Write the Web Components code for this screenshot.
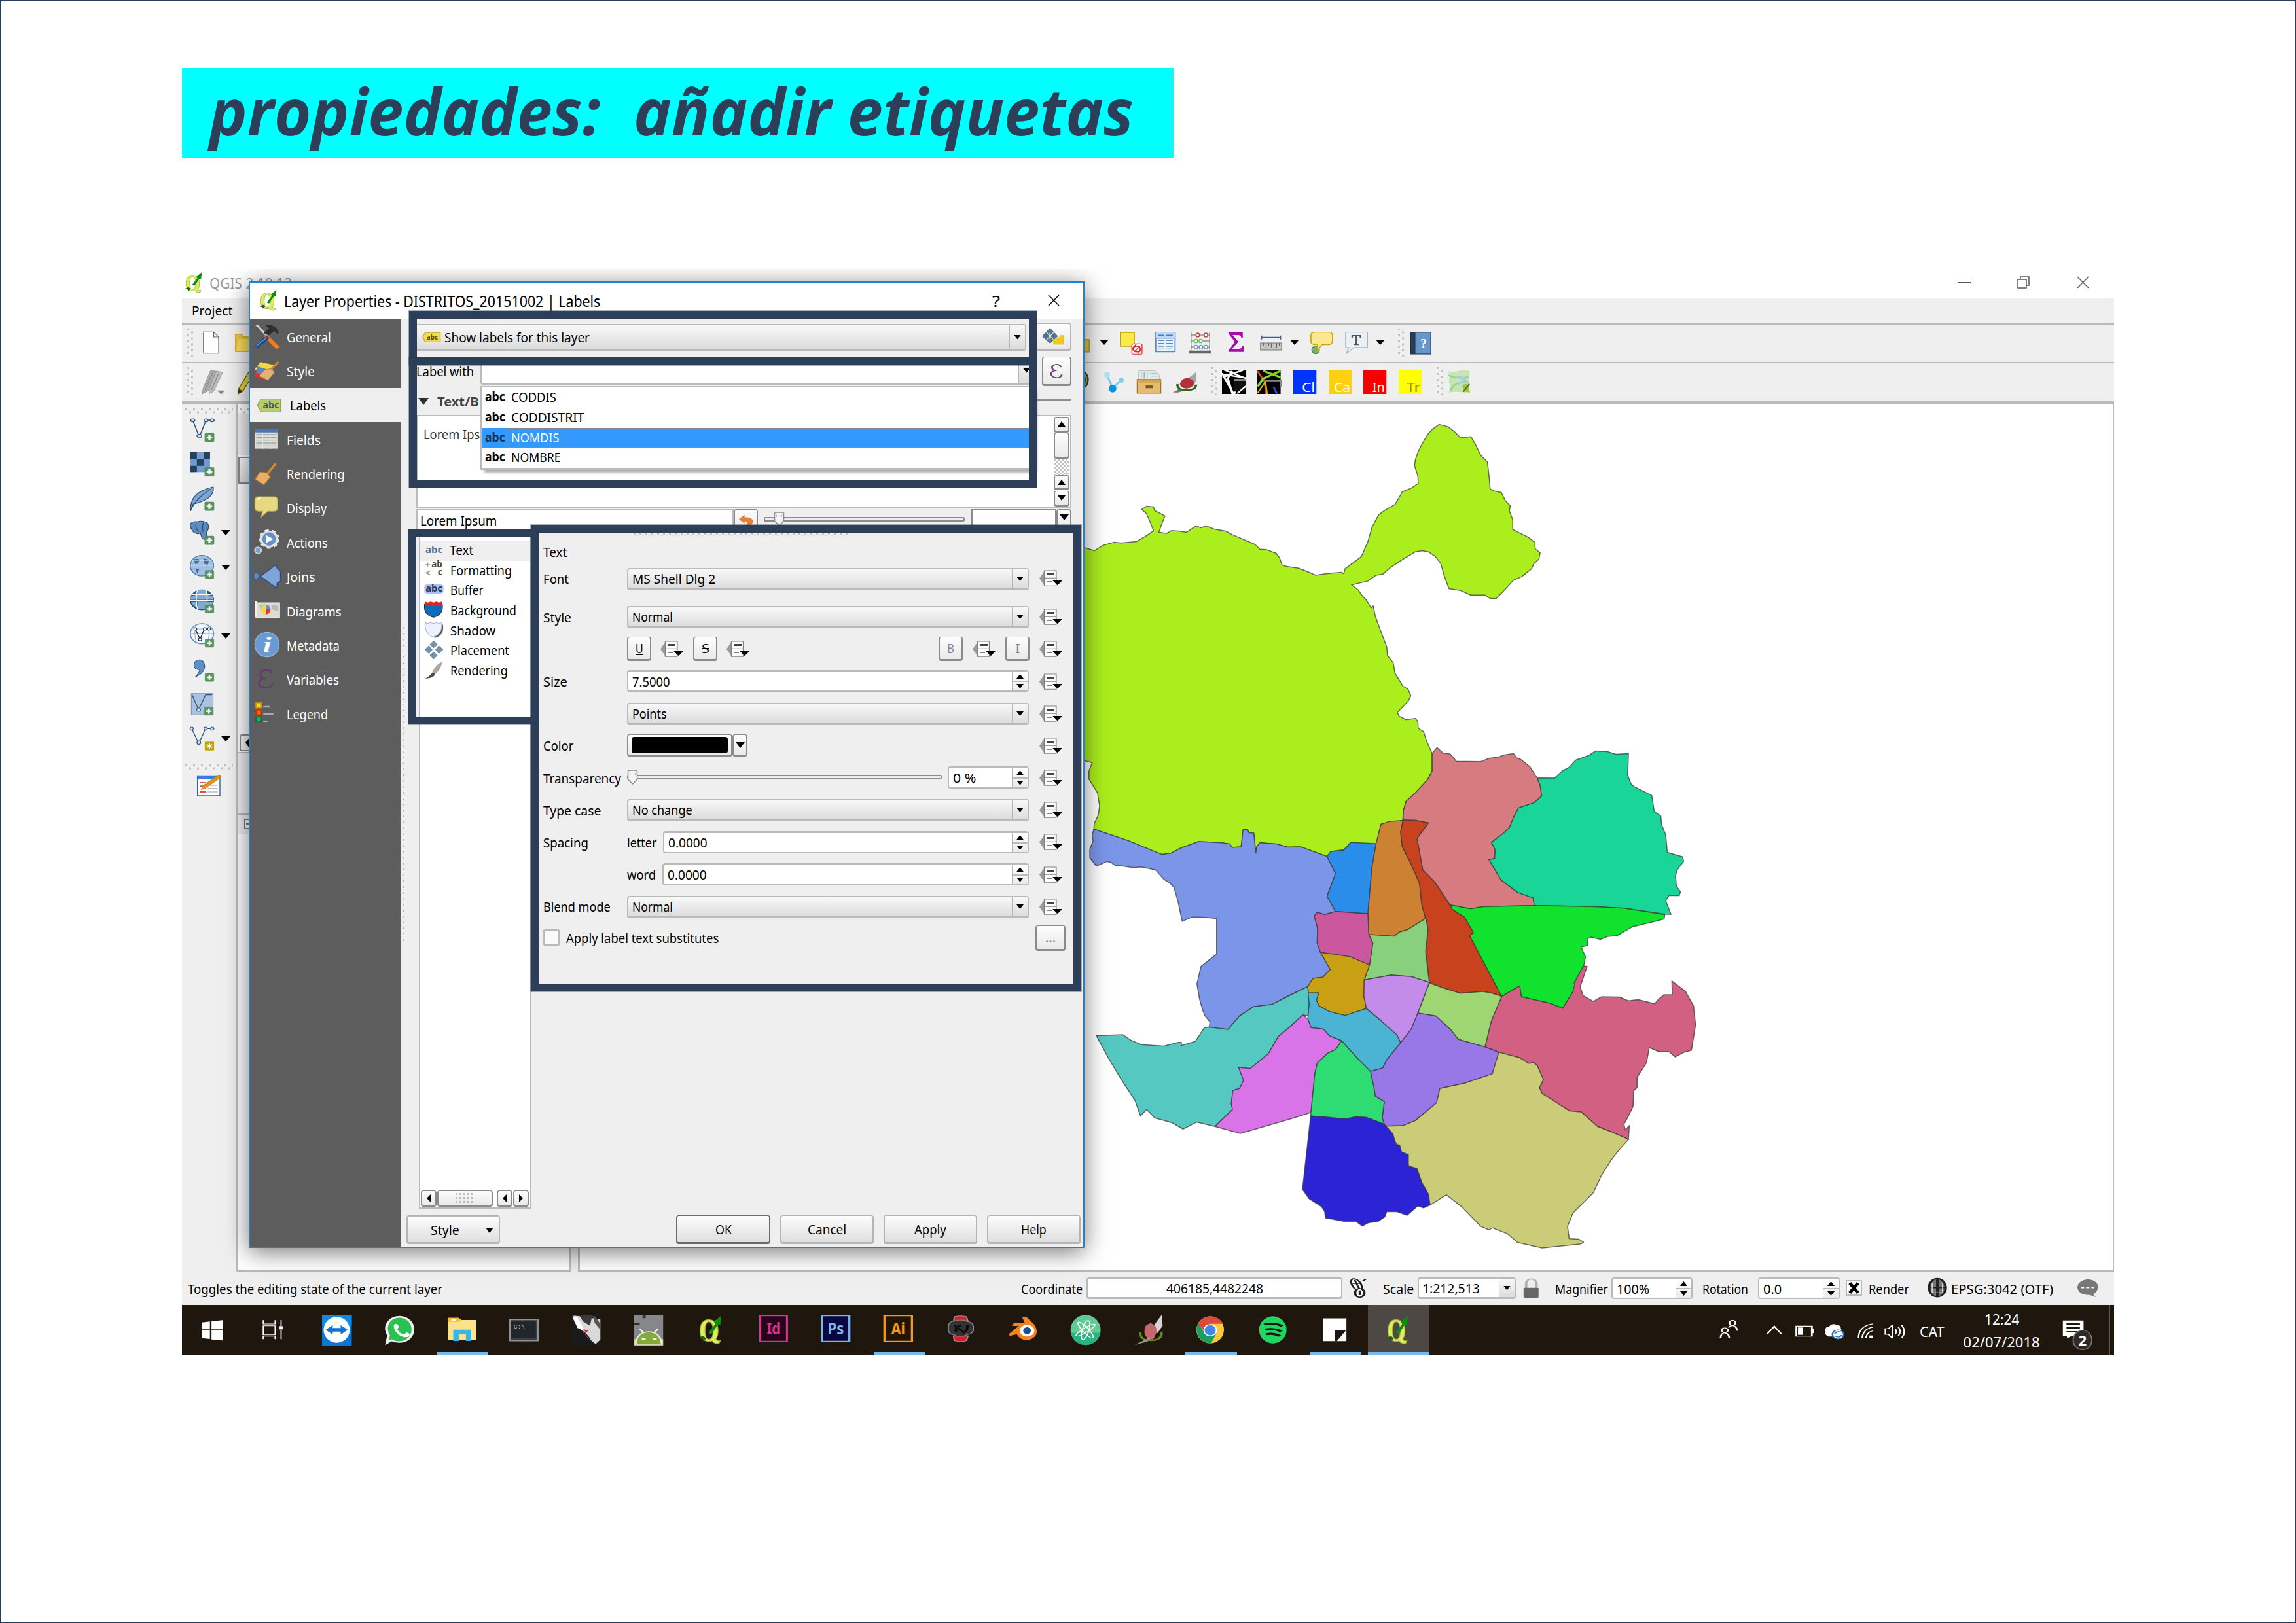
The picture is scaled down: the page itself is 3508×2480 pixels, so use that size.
<!DOCTYPE html>
<html lang="es">
<head>
<meta charset="utf-8">
<title>propiedades: añadir etiquetas</title>
<style>
html,body{margin:0;background:#fff}
body{font-family:"Noto Sans","Open Sans",sans-serif;font-size:20px;color:#000}
</style>
</head>
<body>
<slide-page>
  <page-title slot="title">propiedades:&nbsp; añadir etiquetas</page-title>
  <app-window></app-window>
</slide-page>
<script>
const INK='#2d3f58';
/* Each glyph is drawn on a grid: [origin x, origin y, units per px across, units per px down] */
const GRID={a:[270,400,2.24,3],b:[270,840,2.8,3],c:[600,400,1.4519,3],d:[1600,400,2.24,3],e:[800,790,1.8233,3],
  f:[800,1150,1.8233,3],g:[270,1770,1.12,3],h:[270,1980,1.6505,3],i:[1200,1980,1.5223,3],j:[2000,1930,1.2645,3]};
const box=(x,y,w,h,html,css='')=>({x,y,w,h,html,css});
const svg=(vb,body,extra='')=>`<svg viewBox="${vb}" preserveAspectRatio="none" style="display:block;width:100%;height:100%;overflow:visible" ${extra}>${body}</svg>`;
const G=(k,x,y,w,h,body)=>{const g=GRID[k];return box(g[0]+x/g[2],g[1]+y/g[3],w/g[2],h/g[3],svg(`${x} ${y} ${w} ${h}`,body))};
const T=(x1,x2,yc,text,css='',size=20)=>box(x1,yc-size*.7,x2-x1,size*1.4,`<fit-text style="line-height:${size*1.4}px;font-size:${size}px;${css}">${text}</fit-text>`);
const r=n=>Math.round(n*100)/100;
const row=(x0,y0,items,css='')=>{let p=x0;return `<div style="display:flex;align-items:flex-start;${css}">`+items.map(i=>{const m=i.x-p;p=i.x+i.w;
  return `<div style="flex:none;width:${r(i.w)}px;height:${r(i.h)}px;margin:${r(i.y-y0)}px 0 0 ${r(m)}px;${i.css}">${i.html}</div>`}).join('')+'</div>'};
const col=(x0,y0,items,css='')=>{let p=y0;return `<div style="display:flex;flex-direction:column;align-items:flex-start;${css}">`+items.map(i=>{const m=i.y-p;p=i.y+i.h;
  return `<div style="flex:none;width:${r(i.w)}px;height:${r(i.h)}px;margin:${r(m)}px 0 0 ${r(i.x-x0)}px;${i.css}">${i.html}</div>`}).join('')+'</div>'};
const line=(x,y,w,h,c)=>box(x,y,w,h,'','background:'+c);
const dots=(x,y,w,h,tw=12,th=9)=>box(x,y,w,h,'',`background:conic-gradient(at 3px 3px,#0000 75%,#c2c2c2 0) 0 0/${tw}px ${th}px,conic-gradient(at 3px 3px,#0000 75%,#c2c2c2 0) ${tw/2}px ${th/2}px/${tw}px ${th}px`);
const tri=(x,y,w=14,h=8,c='#000')=>box(x,y,w,h,'',`background:${c};clip-path:polygon(0 0,100% 0,50% 100%)`);

class Base extends HTMLElement{
  constructor(){super();this.attachShadow({mode:'open'})}
  connectedCallback(){this.shadowRoot.innerHTML=`<style>:host{display:block;box-sizing:border-box}*{box-sizing:border-box}${this.css?this.css():''}</style>${this.html()}`;this.ready&&this.ready()}
  a(n,d=''){return this.hasAttribute(n)?this.getAttribute(n):d}
}
const def=(n,c)=>customElements.define(n,c);

/* Text squeezed or stretched to the width of its box */
def('fit-text',class extends Base{
  css(){return ':host{width:100%;white-space:pre}span{display:inline-block;transform-origin:0 50%}'}
  html(){return '<span><slot></slot></span>'}
  ready(){const s=this.shadowRoot.querySelector('span'),w=s.offsetWidth,t=this.offsetWidth;if(w&&t)s.style.transform=`scaleX(${t/w})`}
});
def('page-title',class extends Base{
  css(){return `:host{width:1515px;height:137px;margin:102px 0 0 276px;background:#0ff;color:${INK};padding:0 0 0 42px}
    fit-text{width:1412px;font:italic 700 98px/131px "Open Sans","Noto Sans",sans-serif}`}
  html(){return '<fit-text><slot></slot></fit-text>'}
});
def('mark-frame',class extends Base{
  css(){return `:host{position:absolute;border:solid ${INK};border-width:12.5px 12px;outline:1px solid #2d3f5866}`}
  html(){return ''}
});

/* ---- form controls ---- */
def('q-combo',class extends Base{
  css(){return `:host{height:100%;display:flex;align-items:center;border:2px solid #bababa;border-bottom-width:3px;border-radius:4px;background:${this.hasAttribute('edit')?'#fff':'linear-gradient(#f8f8f8,#dcdcdc)'};padding-left:${this.a('pad','6')}px}
    .t{width:${this.a('tw')}px}.a{align-self:stretch;margin-left:auto;width:24px;border-left:1.5px solid #b5b5b5;display:flex;align-items:center;justify-content:center;background:linear-gradient(#f8f8f8,#dcdcdc)}
    .a i{width:11px;height:7px;background:#000;clip-path:polygon(0 0,100% 0,50% 100%)}`}
  html(){return `<slot name="icon"></slot><fit-text class="t"><slot></slot></fit-text><div class="a"><i></i></div>`}
});
def('q-spin',class extends Base{
  css(){return `:host{height:100%;display:flex;align-items:center;border:2px solid #bababa;border-top-width:3px;border-radius:4px;background:#fff;padding-left:6px}
    .t{width:${this.a('tw')}px}.a{align-self:stretch;margin-left:auto;width:24px;border-left:1.5px solid #b5b5b5;display:flex;flex-direction:column;background:linear-gradient(#fff,#ebebeb)}
    .a div{flex:1;display:flex;align-items:center;justify-content:center}.a div+div{border-top:2px solid #bababa}
    i{width:11px;height:7px;background:#000;clip-path:polygon(0 0,100% 0,50% 100%)}.u{clip-path:polygon(0 100%,100% 100%,50% 0)}`}
  html(){return `<fit-text class="t"><slot></slot></fit-text><div class="a"><div><i class="u"></i></div><div><i></i></div></div>`}
});
def('q-button',class extends Base{
  css(){return `:host{height:100%;display:flex;align-items:center;justify-content:center;border:2px solid ${this.a('edge','#8a8a8a')};border-top-width:1.5px;border-bottom-width:3px;border-radius:4px;background:linear-gradient(#fdfdfd,${this.a('to','#e9e9e9')})}
    .t{width:${this.a('tw','12')}px}`}
  html(){return this.hasAttribute('tw')?`<fit-text class="t"><slot></slot></fit-text>`:'<slot></slot>'}
});
def('q-slider',class extends Base{
  css(){return `:host{height:100%;position:relative;display:flex;align-items:center}.g{flex:1;height:7px;border:2px solid #8c8c8c;background:#eee;border-radius:2px}
    svg{position:absolute;left:${this.a('at','0')}px;top:0;width:17px;height:100%}`}
  html(){return `<div class="g"></div><svg viewBox="0 0 17 23" preserveAspectRatio="none"><path d="M1.5 3Q1.5 1 4 1H13Q15.500 1 15.500 3V15L8.500 22L1.500 15Z" fill="#f4f4f4" stroke="#8c8c8c" stroke-width="1.5"/><path d="M4.500 5v3M12.500 5v3" stroke="#bbb" stroke-width="1.500"/></svg>`}
});
const combo=(x,y,w,h,t,tw)=>box(x,y,w,h,`<q-combo tw="${tw}">${t}</q-combo>`);
const spin=(x,y,w,h,t,tw)=>box(x,y,w,h,`<q-spin tw="${tw}">${t}</q-spin>`);
const btn=(x,y,w,h,t,tw,at='')=>box(x,y,w,h,`<q-button ${tw?`tw="${tw}"`:''} ${at}>${t}</q-button>`);
const over=(x,y)=>box(x,y,35,26,svg('1436 243 64 78','<path d="M1450 248 L1436 281 L1450 314Z" fill="#9a9a9a"/><path d="M1450 246h33v70h-33zM1450 280h33" fill="#fff" stroke="#808080" stroke-width="3"/><path d="M1456 258h22v9h-22z" fill="#444"/><path d="M1457 297h14" stroke="#444" stroke-width="4"/><path d="M1473 291h27l-13 22z"/>'));

/* ---- shared drawings ---- */
const plus=(x,y,w,h,c='#5a9460')=>`<rect x="${x}" y="${y}" width="${w}" height="${h}" rx="4" fill="${c}" stroke="#3f7a48" stroke-width="1"/><path d="M${x+w/2} ${y+h*.2}v${h*.6}M${x+w*.2} ${y+h/2}h${w*.6}" stroke="#fff" stroke-width="7"/>`;
const qlogo='<path fill-rule="evenodd" d="M13 4C2 4-2 17-2 30C-2 45 3 54 13 55L20 54Q24 62 33 59L35 53Q29 55 27 49C31 43 31 36 31 29C31 14 25 4 13 4ZM14 9C20 9 22 20 22 30C22 40 20 50 14 50C9 50 7 40 7 29C7 19 9 9 14 9Z" fill="#dced5c" stroke="#9fae36" stroke-width="1.5"/><path d="M13 35L26 13L23 9L37-6L35 16L31 15L19 38Z" fill="#0f8a12"/><path d="M-4 47L4 42L9 48L4 55L2 50Z" fill="#215a22"/>';
const logo=(x,y,w,h)=>box(x,y,w,h,svg('-4 -6 42 66',qlogo));

/* ---- districts map ---- */
const LIME='M0 480L12 486 36 496 56 478 84 467 100 470 138 465 150 455 160 447 180 428 172 400 163 370 151 355 163 344 180 346 182 358 208 377 200 405 193 433 212 437 224 427 240 429 260 433 270 424 284 411 296 418 308 411 330 423 356 429 372 441 404 460 428 475 440 491 455 492 480 505 488 520 494 545 505 550 535 556 560 570 576 580 600 575 640 570 645 575 648 558 670 535 688 516 704 465 714 415 730 374 745 358 770 338 780 315 788 294 810 282 827 266 826 240 818 205 820 185 826 160 836 132 850 98 862 80 878 64 900 72 915 88 930 109 956 106 968 135 980 170 996 192 998 215 1000 240 1003 285 1012 291 1030 297 1040 325 1052 342 1050 360 1058 390 1058 423 1075 436 1096 450 1112 468 1113 490 1125 503 1122 525 1110 540 1104 558 1080 585 1060 597 1045 620 1030 642 1017 660 1002 659 990 648 955 648 930 632 902 626 890 580 882 540 868 515 852 500 836 496 820 500 790 525 760 553 740 577 724 580 704 600 664 613 680 630 690 650 700 665 712 692 717 685 722 720 735 770 750 825 752 855 766 880 770 915 790 960 802 970 809 992 803 1010 776 1050 780 1062 797 1074 820 1070 826 1080 827 1104 840 1115 848 1150 861 1190 861 1250 850 1280 820 1325 797 1355 791 1385 789 1420 736 1432 724 1502 662 1495 645 1520 613 1526 604 1543 540 1510 508 1511 480 1500 440 1496 432 1510 430 1532 425 1463 413 1462 410 1451 399 1451 394 1510 372 1512 366 1500 346 1496 290 1492 245 1515 222 1532 200 1536 120 1490 34 1449 35 1430 45 1400 48 1370 43 1325 22 1278 22 1250 30 1222 12 1215 0 1215Z';
const DIST=[
['#7b96e8','34 60 120 101 200 147 222 143 245 126 290 103 346 107 366 111 372 123 394 121 399 62 410 62 413 73 425 74 430 143 432 121 440 107 480 111 508 122 540 121 604 154 625 212 604 290 625 342 598 353 580 345 573 358 581 400 580 450 588 482 612 541 594 567 570 571 557 599 510 630 470 660 425 668 390 700 362 746 340 743 316 738 318 720 306 700 300 680 292 640 286 590 296 530 334 488 334 366 300 362 275 361 250 376 246 350 240 310 230 260 220 245 205 232 185 200 150 190 130 192 100 186 85 184 76 174 66 171 40 187 24 158 24 130 32 100 30 80'],
['#2a8dea','604 154 613 137 645 132 662 106 724 110 714 190 704 350 625 342 604 290 625 212'],
['#d67c80','861 -199 873 -219 888 -200 905 -197 920 -172 980 -171 1000 -182 1025 -187 1035 -193 1060 -198 1068 -183 1078 -178 1100 -153 1118 -115 1125 -90 1129 -53 1110 -30 1072 -12 1060 20 1050 55 1035 75 1006 106 1015 130 1014 160 1000 165 1030 235 1070 277 1108 296 1111 322 985 326 955 333 905 320 868 243 838 200 824 92 852 39 820 30 790 29 791 -4 797 -34 820 -64 850 -109 861 -139'],
['#1ad598','1118 -115 1160 -114 1180 -140 1195 -150 1212 -176 1245 -193 1260 -207 1290 -205 1310 -196 1341 -198 1339 -125 1347 -95 1355 -85 1398 -55 1404 0 1420 15 1422 45 1432 80 1436 140 1473 155 1476 170 1460 200 1456 220 1458 255 1468 275 1465 288 1440 288 1432 305 1445 352 1430 351 1330 331 1260 326 1111 322 1108 296 1070 277 1030 235 1000 165 1014 160 1015 130 1006 106 1035 75 1050 55 1060 20 1072 -12 1110 -30 1129 -53 1125 -90'],
['#11e22d','905 320 955 333 985 326 1111 322 1260 326 1330 331 1430 353 1428 368 1400 378 1350 395 1313 425 1290 428 1272 438 1250 430 1240 436 1242 458 1225 464 1236 497 1230 540 1206 590 1206 615 1180 674 1150 657 1079 634 1075 597 1031 633 952 424 962 415 940 362 910 335'],
['#cd8132','736 44 755 34 790 30 784 70 788 120 808 175 830 245 836 320 845 366 800 405 782 412 768 427 706 421 704 350 714 190 724 110'],
['#c9421e','790 29 820 30 852 39 824 92 838 200 868 243 905 322 910 335 940 362 962 415 952 424 1031 633 1008 622 985 616 930 622 890 605 854 585 845 480 851 400 845 366 836 320 830 245 808 175 788 120 784 70'],
['#d26083','1031 633 1075 597 1079 634 1150 657 1180 674 1206 615 1210 582 1230 530 1240 530 1223 600 1230 630 1255 650 1275 634 1320 635 1340 648 1365 644 1405 658 1415 642 1428 627 1448 627 1447 580 1480 615 1500 665 1505 730 1495 817 1475 825 1455 840 1440 822 1415 822 1392 808 1385 860 1362 910 1362 945 1354 955 1352 1010 1340 1045 1330 1070 1333 1090 1343 1075 1341 1122 1300 1097 1265 1078 1225 1028 1197 1025 1130 965 1123 945 1133 918 1118 870 1110 860 1097 862 1075 843 1024 824 990 806 1006 715'],
['#9dd672','854 587 890 605 930 622 985 616 1008 622 1031 633 1006 715 990 806 925 780 905 745 870 700 826 690'],
['#88d07c','706 421 768 427 782 412 800 405 845 366 851 400 845 480 854 585 810 565 760 560 695 577 708 525 716 450'],
['#cb589e','573 358 580 345 598 353 625 342 704 350 706 421 716 450 708 525 660 497 588 482 580 450 581 400'],
['#c9a014','588 482 660 497 708 525 695 577 694 630 700 675 648 698 610 685 584 665 578 645 584 621 556 621 557 599 570 571 594 567 612 541'],
['#c38cea','695 577 760 560 810 565 854 585 826 690 810 745 784 792 775 765 735 715 700 673 694 630'],
['#4bb4d4','556 621 584 621 578 645 584 665 610 685 648 698 700 675 735 715 775 765 784 792 750 850 740 878 710 890 675 840 640 785 610 768 595 745 565 740 557 710 560 660'],
['#9877e6','826 690 870 700 905 745 925 780 990 806 1024 824 1008 898 940 930 880 948 872 997 820 1058 790 1075 746 1077 739 1050 744 993 722 975 718 940 710 890 740 878 750 850 784 792 810 745'],
['#55c8c1','557 599 560 660 557 700 545 696 515 735 485 770 460 830 416 880 388 876 400 920 390 948 374 955 370 1000 373 1020 330 1078 285 1063 252 1087 225 1065 183 1049 163 1020 148 1042 135 990 100 915 70 845 40 767 105 764 125 783 150 798 205 803 240 790 248 790 248 801 282 787 304 740 316 738 362 746 390 700 425 668 470 660'],
['#d873e8','545 696 557 710 565 740 595 745 610 768 640 785 625 815 605 828 580 862 574 900 565 1030 520 1050 392 1102 330 1078 373 1020 370 1000 374 955 390 948 400 920 388 876 416 880 460 830 485 770 515 735'],
['#2fdc74','640 785 675 840 710 890 718 940 722 975 744 993 739 1050 744 1070 700 1047 675 1045 650 1052 564 1042 574 900 580 862 605 828 625 815'],
['#cacc77','1024 824 1075 843 1097 862 1110 860 1118 870 1133 918 1123 945 1130 965 1197 1025 1225 1028 1265 1078 1300 1097 1341 1122 1320 1155 1300 1190 1275 1245 1255 1305 1205 1375 1192 1420 1196 1462 1220 1464 1231 1474 1225 1480 1130 1494 1070 1475 1045 1445 1008 1425 1000 1432 980 1420 935 1355 896 1312 856 1347 780 1150 746 1077 790 1075 820 1058 872 997 880 948 940 930 1008 898'],
['#2c24d4','564 1042 650 1052 675 1045 700 1047 744 1070 765 1103 772 1138 782 1143 786 1165 803 1175 803 1213 824 1222 836 1270 852 1310 856 1347 840 1357 826 1350 800 1382 775 1370 750 1370 745 1388 730 1402 705 1408 690 1419 675 1403 645 1403 600 1391 598 1368 590 1352 560 1325 544 1293']];
def('district-map',class extends Base{
  css(){return ':host{height:100%}svg{display:block}path,polygon{vector-effect:non-scaling-stroke;stroke:#3a3a3a;stroke-opacity:.75;stroke-width:1.5;stroke-linejoin:round}'}
  html(){return `<svg width="2344" height="1322" viewBox="886 618 2344 1322"><g transform="translate(1650 620) scale(.625 .446429)"><path d="${LIME}" fill="#abee1d"/></g><g transform="translate(1650 1240) scale(.625 .446429)">${DIST.map(d=>`<polygon fill="${d[0]}" points="${d[1]}"/>`).join('')}</g></svg>`}
});

/* ---- main window ---- */
def('tool-bar',class extends Base{
  html(){const k=this.a('n');
  if(k==='1')return row(278,496,[dots(286,502,10,43),
    G('a',90,322,56,100,'<path d="M92 323h35l17 23v74h-52z" fill="#fff" stroke="#666" stroke-width="3"/><path d="M127 323v23h17" fill="none" stroke="#666" stroke-width="3"/>'),
    G('a',200,330,60,84,'<path d="M202 332h20l6 12h30v68h-56z" fill="#f0c53a" stroke="#c99a10" stroke-width="3"/><path d="M212 355h50v56h-58z" fill="#fadb62"/>'),
    G('d',110,355,36,62,'<path d="M110 357h34v58h-34z" fill="#dcc63a" stroke="#a8930c" stroke-width="3"/>'),tri(1680,519),
    G('d',248,322,78,105,'<path d="M250 325h47v63h-47z" fill="#fce94a" stroke="#c4a000" stroke-width="4"/><rect x="289" y="377" width="35" height="48" rx="6" fill="#fff" stroke="#e02a2a" stroke-width="3"/><circle cx="306" cy="401" r="13" fill="none" stroke="#d22" stroke-width="5"/><path d="M297 415l20-28M292 395l12-16M310 422l12-18" stroke="#e03a3a" stroke-width="4"/>'),
    G('d',370,322,70,95,'<path d="M372 325h66v89h-66z" fill="#e9f1fa" stroke="#5b8bc6" stroke-width="4"/><path d="M372 325h66v26h-66z" fill="#bfdaf0"/><path d="M380 339h20M408 339h22" stroke="#4a7dbb" stroke-width="7"/><path d="M374 352h62" stroke="#5b8bc6" stroke-width="2"/><path d="M380 362h20M408 362h22M380 375h20M408 375h22M380 388h20M408 388h22M380 401h20M408 401h22" stroke="#5b8bc6" stroke-width="4"/>'),
    G('d',487,322,75,102,'<path d="M493 324v86M557 324v86M493 337h64M493 364h64M493 391h64" stroke="#666" stroke-width="3" fill="none"/><path d="M487 408h75v14h-75z" fill="#666"/><g stroke-width="4" fill="#fff"><g stroke="#d33e3e"><ellipse cx="516" cy="337" rx="6" ry="9"/><ellipse cx="544" cy="337" rx="6" ry="9"/></g><g stroke="#6cba6c"><ellipse cx="510" cy="364" rx="6" ry="8"/><ellipse cx="526" cy="364" rx="6" ry="8"/></g><g stroke="#6a9ac0"><ellipse cx="510" cy="392" rx="6" ry="9"/><ellipse cx="527" cy="392" rx="6" ry="9"/><ellipse cx="544" cy="392" rx="6" ry="9"/></g></g>'),
    G('d',618,322,54,95,'<path d="M620 325h49v24h-5q-2-12-12-12h-18l20 31-22 32h24q10 0 12-14h4v28h-52v-6l22-40-22-38z" fill="#a60bab"/>'),
    G('d',728,337,76,73,'<path d="M733 348h65M733 339v18M798 339v18" stroke="#3c5f8c" stroke-width="5"/><path d="M730 373h72v33h-72z" fill="#c8c8c8" stroke="#777" stroke-width="3"/><path d="M740 374v14M749 374v20M758 374v14M767 374v20M776 374v14M785 374v20M794 374v14" stroke="#666" stroke-width="2.500"/>'),tri(1971,519),
    G('d',900,320,78,104,'<ellipse cx="918" cy="403" rx="13" ry="18" fill="#79b079" stroke="#4c8a50" stroke-width="3"/><path d="M914 322h50q12 0 12 16v24q0 16-14 17h-22l-16 27 1-27h-10q-13-1-13-17v-24q0-16 12-16z" fill="#fbe98f" stroke="#c9a514" stroke-width="4"/>'),
    G('d',1020,320,78,104,'<path d="M1022 322h75v69h-44l-30 30 10-30h-11z" fill="#eaf1f6" stroke="#a7b4bd" stroke-width="3"/><path d="M1042 335h33v12h-4l-2-7h-8v36h6v5h-17v-5h6v-36h-8l-2 7h-4z" fill="#555"/>'),tri(2102,519),
    dots(2136,502,10,43),
    G('d',1244,320,72,104,'<path d="M1245 322h69v100h-69z" fill="#6695c9" stroke="#223" stroke-width="3"/><path d="M1245 322h16v100h-16z" fill="#2a3c52"/><text x="1278" y="395" font-size="66" textLength="22" lengthAdjust="spacingAndGlyphs" fill="#fff" font-family="Liberation Serif" font-weight="700">?</text>')],'height:57px');
  const sq=(x,f,t,tf,tw)=>G('d',x,495,79,111,`<path d="M${x} 495h79v111h-79z" fill="${f}"/><text x="${x+77-tw}" y="597" font-size="58" textLength="${tw-3}" lengthAdjust="spacingAndGlyphs" fill="${tf}">${t}</text>`);
  return row(278,555,[dots(286,561,10,43),
    G('a',84,494,80,114,'<path d="M115 496l22 6-30 88-20 14 2-24z" fill="#a9a9a9" stroke="#8a8a8a" stroke-width="2"/><path d="M134 500l22 6-30 86-16 12 0-22z" fill="#bdbdbd" stroke="#8a8a8a" stroke-width="2"/><path d="M122 508l-26 78M142 512l-24 74" stroke="#888" stroke-width="3"/><path d="M138 589h26l-13 18z" fill="#888"/>'),
    G('a',210,500,40,106,'<path d="M248 500v44l-22 48-16 12 2-24z" fill="#e8cf3a" stroke="#5a4a10" stroke-width="3"/><path d="M210 604l3-22 12 10z" fill="#333"/>'),
    G('d',112,500,31,80,'<ellipse cx="122" cy="540" rx="18" ry="36" fill="#8fb936" stroke="#333" stroke-width="5"/><path d="M122 512q18 28 0 56" fill="#d9d94a" stroke="#445" stroke-width="3"/>'),
    G('d',195,500,68,100,'<path d="M205 518l19 60 30-36" stroke="#7fc8ef" stroke-width="7" fill="none"/><ellipse cx="205" cy="517" rx="10" ry="14" fill="#b5e1f8"/><ellipse cx="253" cy="542" rx="9" ry="12" fill="#86cdf2"/><ellipse cx="224" cy="580" rx="13" ry="18" fill="#0d93dd"/>'),
    G('d',307,495,83,110,'<path d="M313 540v-40h55l16 16v28z" fill="#e4ebeb" stroke="#a9b5b5" stroke-width="2"/><path d="M322 505v30M332 505v30M342 505v30M354 512h20M354 524h26" stroke="#9aa" stroke-width="3"/><path d="M308 539h81v64h-81z" fill="#e6bb72" stroke="#9c7230" stroke-width="3"/><path d="M308 540h81v14h-81z" fill="#d6a453"/><path d="M337 567h24v13h-24z" fill="#7a5a28"/>'),
    G('d',430,505,82,98,'<path d="M480 538l30-32-2 44-10 26z" fill="#a5a5a5"/><path d="M430 600l24-18 14 10-20 8z" fill="#777"/><path d="M446 562q-4 26 32 28 34-2 30-26" fill="none" stroke="#2c6a1a" stroke-width="8"/><path d="M454 562q4-26 24-28 26 4 24 26-4 22-26 22-20-2-22-20z" fill="#b3303a"/>'),
    dots(1850,561,10,43),
    G('d',598,495,83,111,'<path d="M598 495h83v111h-83z"/><path d="M598 515l82 18M605 495l75 40M600 530l70-34M632 500l-14 34 16 72M598 510l40 96M640 542h40M680 575h-30l-10 31" stroke="#fff" stroke-width="7" fill="none"/><path d="M640 545h40v50h-40z" fill="#111"/><path d="M680 570l-30 34" stroke="#fff" stroke-width="6"/>'),
    G('d',718,495,82,111,'<path d="M718 495h82v111h-82z"/><path d="M720 500l26 50 4 56" stroke="#e23a2a" stroke-width="7" fill="none"/><path d="M740 500l60 30M800 500l-60 36-18 36" stroke="#86d420" stroke-width="9" fill="none"/><path d="M750 545h50v30" fill="none" stroke="#888" stroke-width="7"/><path d="M722 600l26-50 6 56" stroke="#d8b020" stroke-width="5" fill="none"/><path d="M776 575l12 31" stroke="#3344dd" stroke-width="7"/>'),
    sq(842,'#0033fb','Cl','#fff',48),sq(963,'#ffd012','Ca','#fff',59),sq(1083,'#f90000','In','#fff',46),sq(1204,'#ffff00','Tr','#9a8a2a',50),
    dots(2195,561,10,43),
    G('d',1368,495,80,111,'<path d="M1372 500q20 12 38-2 20-4 36 4-6 40 0 60-4 30-10 40-30-10-62-2 6-30 0-50 4-30-2-50z" fill="#c5e5b5"/><path d="M1372 520q30 20 70 8M1380 590q10-40 60-40" stroke="#9ed08e" stroke-width="7" fill="none"/><path d="M1400 530q20-8 30 14l-24 16" fill="none" stroke="#a6cbe6" stroke-width="10"/><path d="M1420 566q10-12 22 0l4 34-20-6z" fill="#a8c040"/><path d="M1424 596l20-36" stroke="#3e7a1a" stroke-width="5"/>')],'height:58px')}
});
const V=(x,y,w,h)=>`<path d="M${x+8} ${y+10}L${x+.37*w} ${y+h*.78}L${x+.65*w} ${y+10}H${x+w-8}" fill="none" stroke="#33557d" stroke-width="4"/><g fill="#cfe0f2" stroke="#33557d" stroke-width="3.500"><circle cx="${x+8}" cy="${y+10}" r="7"/><circle cx="${x+.65*w}" cy="${y+10}" r="7"/><circle cx="${x+w-8}" cy="${y+10}" r="7"/><circle cx="${x+.37*w}" cy="${y+h*.74}" r="8"/></g>`;
def('layer-bar',class extends Base{
  html(){const rr=(i,ty)=>box(278,i.y,83,i.h,row(278,i.y,ty?[i,tri(338,ty,14,8)]:[i]));
  return col(278,618,[dots(283,624,73,9),
    rr(G('a',46,718,82,110,V(46,718,82,110)+plus(95,786,32,40))),
    rr(G('a',46,873,82,110,'<path d="M46 873h67v91h-67z" fill="#6f9bce"/><path d="M46 873h22v31h-22zM91 873h22v31h-22zM68 904h23v31h-23zM46 935h22v29h-22z" fill="#24405f"/>'+plus(95,943,32,40))),
    rr(G('a',44,1032,84,110,'<path d="M46 1142q0-50 20-74t58-36q4 30-18 52-26 22-50 26z" fill="#7ba5d3" stroke="#2c4a6e" stroke-width="3"/><path d="M46 1142q20-60 70-100" stroke="#2c4a6e" stroke-width="3" fill="none"/>'+plus(95,1101,32,40))),
    rr(G('a',44,1188,84,110,'<path d="M46 1200q10-12 24-8 14-6 24 0 14 2 14 22 0 14-6 24v26q-6 14-16 4l-6-26q-6 8-12 4-12-2-18-20-6-14-4-26z" fill="#5e8cbd" stroke="#2c4a6e" stroke-width="3"/><path d="M66 1194q-6 30 10 42M92 1194q-8 20-2 44" stroke="#2c4a6e" stroke-width="3" fill="none"/>'+plus(95,1257,32,40)),810),
    rr(G('b',56,24,104,110,'<ellipse cx="108" cy="73" rx="50" ry="47" fill="#9dbfe2" stroke="#4a78ac" stroke-width="4"/><path d="M72 46q14-8 26 0-4 18-18 20zM114 40l26 6-8 24-14-6zM80 84l16 6-8 20z" fill="#41658f"/><path d="M60 73h96M108 26v94M66 50h84M66 98h84" stroke="#d3e3f4" stroke-width="2"/>'+plus(121,95,38,38)),863),
    rr(G('b',56,183,104,107,'<ellipse cx="108" cy="230" rx="50" ry="46" fill="#2d5078" stroke="#24405f" stroke-width="3"/><path d="M60 212q50-14 96 0v16h-98zM90 186h34v20h-34zM88 238h36v34h-34zM62 240h22l4 26q-20-8-26-26zM130 240h26q-4 18-24 26z" fill="#7fa9d6"/><path d="M58 232h100M88 186q-10 46 2 90M126 186q10 46-2 90M66 205h84" stroke="#fff" stroke-width="4" fill="none"/>'+plus(121,252,38,38))),
    rr(G('b',56,340,104,110,'<ellipse cx="108" cy="386" rx="50" ry="46" fill="#f3f8fd" stroke="#5e90c8" stroke-width="5"/><path d="M58 386h100M64 364h88M108 340v92M84 344q-14 42 2 84M132 344q14 42-2 84" stroke="#8fb4de" stroke-width="3" fill="none"/><path d="M80 364l20 48 18-48h20" fill="none" stroke="#222" stroke-width="4"/><g fill="#fff" stroke="#222" stroke-width="3"><circle cx="80" cy="364" r="6"/><circle cx="120" cy="364" r="6"/><circle cx="138" cy="364" r="6"/><circle cx="100" cy="412" r="7"/></g>'+plus(121,410,38,38)),968),
    rr(G('b',70,504,90,102,'<path d="M96 505q22 0 24 28-2 34-40 49 18-18 18-32-24 0-24-22 2-22 22-23z" fill="#5f8fc6" stroke="#33557d" stroke-width="3"/>'+plus(121,566,38,38))),
    rr(G('b',62,657,98,105,'<path d="M63 659h93v98h-93z" fill="#a9c2dd" stroke="#7e93aa" stroke-width="3"/><path d="M66 665l28 68 30-68h28" fill="none" stroke="#33557d" stroke-width="4"/><circle cx="94" cy="733" r="8" fill="#cfe0f2" stroke="#33557d" stroke-width="3"/>'+plus(119,721,38,38))),
    rr(G('b',56,810,104,110,V(56,810,104,100)+'<rect x="120" y="880" width="40" height="40" rx="3" fill="#c4a20c"/><path d="M140 886v28M128 893l24 14M152 893l-24 14" stroke="#fff" stroke-width="5"/>'),1125),
    dots(283,1168,73,9),
    rr(G('b',86,1032,104,100,'<path d="M88 1036h96v92h-96z" fill="#fff" stroke="#2a62c0" stroke-width="4"/><path d="M88 1036h96v16h-96z" fill="#3b7be0"/><path d="M98 1068h24M98 1084h18M98 1110h26" stroke="#e84a4a" stroke-width="6"/><path d="M130 1080h44M130 1094h44M130 1110h44" stroke="#bbb" stroke-width="4"/><path d="M104 1100l6-18 66-48q14-4 12 10l-68 50z" fill="#e0921c" stroke="#a8680c" stroke-width="2"/>'))])}
});
def('status-bar',class extends Base{
  css(){return ':host{height:51px;background:#efefef}'}
  html(){return row(278,1943,[T(287,676,1970,'Toggles the editing state of the current layer'),T(1560,1654,1970,'Coordinate'),
    box(1660,1952,391,33,'<fit-text style="width:148px;margin:1px auto">406185,4482248</fit-text>','border:2px solid #bababa;border-bottom-width:3px;border-radius:4px;background:#fff'),
    G('j',76,68,38,90,'<ellipse cx="92" cy="98" rx="9" ry="28" fill="#fff" stroke="#222" stroke-width="4" transform="rotate(-12 92 98)"/><path d="M88 76l10 44M84 92h16" stroke="#222" stroke-width="4"/><ellipse cx="98" cy="136" rx="9" ry="20" fill="#fff" stroke="#222" stroke-width="5"/><path d="M98 124v22M104 82l6-10" stroke="#222" stroke-width="4"/>'),
    T(2113,2160,1970,'Scale'),box(2166,1952,150,33,'<q-combo edit tw="88" pad="5">1:212,513</q-combo>'),
    G('j',413,68,31,92,'<path d="M419 114v-24q2-18 10-18t10 18v24" fill="none" stroke="#b0b0b0" stroke-width="5"/><rect x="414" y="112" width="29" height="46" rx="3" fill="#666"/>'),
    T(2376,2457,1970,'Magnifier'),spin(2462,1952,124,33,'100%',50),T(2601,2671,1970,'Rotation'),spin(2686,1952,125,33,'0.0',28),
    box(2820,1956,25,24,svg('0 0 25 24','<path d="M5 3L20 21M20 3L5 21" stroke="#000" stroke-width="6"/>'),'border:2px solid #bababa;background:#fff'),
    T(2855,2917,1970,'Render'),G('j',1195,70,38,88,'<ellipse cx="1214" cy="114" rx="16" ry="42" fill="#777" stroke="#222" stroke-width="5"/><path d="M1196 114h36M1214 72v84" stroke="#222" stroke-width="5"/><path d="M1204 92h20v44h-20z" fill="none" stroke="#ddd" stroke-width="2"/>'),
    T(2981,3137,1970,'EPSG:3042 (OTF)'),
    G('j',1484,72,40,86,'<path d="M1504 74q19 4 20 36-1 24-10 32l6 14-12-10q-22 2-24-34 1-32 20-38z" fill="#777"/><path d="M1491 112h6M1501 112h6M1511 112h6" stroke="#fff" stroke-width="7"/>')],'')}
});
const W='fill="none" stroke="#fff"';
const ad=(k,x,y,w,h,bg,c,t,tw)=>G(k,x,y,w,h,`<path d="M${x+2} ${y+4}h${w-4}v${h-8}h-${w-4}z" fill="${bg}" stroke="${c}" stroke-width="5"/><text x="${x+w/2-tw/2}" y="${y+h*.71}" font-size="76" font-weight="700" textLength="${tw}" lengthAdjust="spacingAndGlyphs" fill="${c}">${t}</text>`);
def('task-bar',class extends Base{
  css(){return ':host{height:77px;background:#1f170e;color:#fff}'}
  html(){
  const run=(x,w)=>box(x,2066,w,5,'','background:#76b9ed');
  const icons=[
    G('h',63,110,54,96,'<path d="M64 121l20-4v36h-20zM88 116l28-5v42h-28zM64 157h20v40l-20-4zM88 157h28v47l-28-5z" fill="#fff"/>'),
    G('h',216,110,52,90,`<path d="M218 111v17h30v-17M218 136h30v42h-30zM218 198v-14h30v14M263 111v26M263 154v44" ${W} stroke-width="3"/><path d="M259 138h8v15h-8z" fill="#fff"/>`),
    G('h',366,87,75,141,'<path d="M366 87h75v141h-75z" fill="#0d74d8"/><path d="M366 87h75v50h-75z" fill="#1187e6"/><ellipse cx="403" cy="156" rx="33" ry="59" fill="#fff"/><path d="M375 156l18-22v14h20v-14l18 22-18 22v-14h-20v14z" fill="#1273d6"/>'),
    G('h',528,92,68,126,'<path d="M562 95c46 6 44 116-2 116-10 0-14-4-18-8l-12 12 4-34c-14-46 2-84 28-86z" fill="#27c250" stroke="#f2f2f2" stroke-width="7"/><path d="M548 130q8-10 12 12l-4 10q6 20 16 24l8-8q10 4 6 16-10 12-26-6-16-24-12-48z" fill="#fff"/>'),
    G('h',683,100,72,110,'<path d="M683 102h28l6 10h37v92h-71z" fill="#fde28a"/><path d="M683 102h28l6 10-6 8h-28z" fill="#f9bb2d"/><path d="M692 108h12v8h-12z" fill="#fff"/><path d="M697 156h45v52h-13v-30h-18v30h-14z" fill="#3ab3e8"/>'),
    G('h',839,108,73,100,'<path d="M840 109h71v97h-71z" fill="#3a3d42" stroke="#8d9298" stroke-width="5"/><path d="M844 118h62v74h-62z" fill="#22252a"/><text x="850" y="150" font-size="26" textLength="38" lengthAdjust="spacingAndGlyphs" fill="#bbb" font-family="Liberation Mono">C:\\_</text>'),
    G('h',995,88,75,140,'<path d="M995 88h75v140h-75z" fill="#1a1a1a"/><path d="M1000 92l24 4 44 14v92l-12 20-20-30-22-46z" fill="#d9d9d9"/><path d="M1014 88h34l-6 50-18-20z" fill="#3a3a3a"/><path d="M997 96l14 54 18 12-20-66z" fill="#fff"/><path d="M1048 92q20 14 20 64l-14-30z" fill="#555"/><path d="M1024 154l16 5-8 10z" fill="#d33"/><path d="M1012 150l16 20 14 30" stroke="#222" stroke-width="4" fill="none"/>'),
    G('h',1154,88,73,140,'<path d="M1154 88h73v140h-73z" fill="#85878a"/><path d="M1154 200h73v28h-73z" fill="#c8cfb0"/><path d="M1158 222q2-54 33-56 30 4 32 56z" fill="#86a93c" stroke="#eef2dd" stroke-width="4"/><path d="M1168 152l10 20M1214 152l-10 20" stroke="#eef2dd" stroke-width="5"/><circle cx="1178" cy="200" r="5" fill="#fff"/><circle cx="1206" cy="200" r="5" fill="#fff"/><path d="M1175 88h8v16h-8zM1154 124h14v10h-14z" fill="#333"/>'),
    logo(1068,2010,35,43),
    ad('h',1470,88,72,126,'#27041b','#d8358f','Id',34),
    ad('i',84,88,67,126,'#0b0640','#7cb4ee','Ps',38),
    ad('i',229,88,68,126,'#241405','#f39a1c','Ai',32),
    G('i',377,90,63,122,'<path d="M394 96q14-8 28 0l4 22h-34zM392 184h34l-4 22q-14 8-28 0z" fill="#d81f28" stroke="#999" stroke-width="3"/><path d="M380 136q2-20 14-20l6-4h18l6 6q12 2 14 20v22q-4 16-14 18l-8 8h-16l-6-6q-12-4-14-20z" fill="#333" stroke="#888" stroke-width="3"/><path d="M394 136l24 34M398 166q-4-26 12-30M424 134q2 26-10 38" stroke="#0c0c0c" stroke-width="6" fill="none"/>'),
    G('i',519,96,67,110,'<path d="M550 96l10 0 20 38q12 46-8 64-22 16-34-22l-16 8-3-8 24-38h-16l4-12h26z" fill="#f5831f"/><ellipse cx="562" cy="160" rx="17" ry="27" fill="#fff"/><ellipse cx="562" cy="160" rx="9" ry="16" fill="#14539a"/>'),
    G('i',663,87,71,140,`<ellipse cx="699" cy="157" rx="35" ry="69" fill="#5fcb93"/><path d="M665 170q6 54 34 56 28-2 34-56z" fill="#14a577" opacity=".7"/><g ${W} stroke-width="3"><ellipse cx="699" cy="157" rx="8" ry="44" transform="rotate(8 699 157)"/><ellipse cx="699" cy="157" rx="8" ry="40" transform="rotate(-24 699 157)"/><ellipse cx="699" cy="157" rx="8" ry="34" transform="rotate(38 699 157)"/></g>`),
    G('i',812,88,68,140,'<path d="M858 136l18-48 2 50-12 34z" fill="#d5d5d5"/><path d="M812 226l14-12 22-24 4 14-20 12z" fill="#9a9a9a"/><path d="M826 168q-2 36 25 38 28-4 24-40" fill="none" stroke="#5e8a1c" stroke-width="6"/><path d="M836 160q-2-24 14-34 16 8 14 44l-8 32q-22-4-20-42z" fill="#c4666a"/>'),
    G('i',956,92,66,126,'<ellipse cx="988" cy="155" rx="32" ry="62" fill="#fdc93c"/><path d="M960 127q8-32 28-34 22 2 30 34h-30l-14 34z" fill="#dc4a3e"/><path d="M960 126q-8 30 2 62 8 26 28 29l12-44-14 10-12-14z" fill="#15a060"/><ellipse cx="988" cy="157" rx="16" ry="28" fill="#fff"/><ellipse cx="988" cy="157" rx="13" ry="24" fill="#4a86e8"/>'),
    G('i',1101,92,66,126,'<ellipse cx="1134" cy="155" rx="32" ry="62" fill="#1ed760"/><path d="M1114 130q24-10 42 8M1116 154q20-8 38 8M1118 176q18-8 32 8" fill="none" stroke="#1c1712" stroke-width="9"/>'),
    G('i',1251,102,55,106,'<path d="M1251 102h55v106h-55z" fill="#fff"/><path d="M1251 102h55v6h-55z" fill="#888"/><path d="M1279 156h27l-22 52h-5z" fill="#1c1712"/>')];
  icons.push(box(2090,1994,93,72,row(2090,1994,[logo(2119,2010,33,43)]),'background:#4d4843'));
  const tray=[
    G('j',795,262,34,84,`<g ${W} stroke-width="3.500"><ellipse cx="819" cy="275" rx="6" ry="11"/><path d="M812 296q2-9 7-9 8 2 9 24"/><ellipse cx="804" cy="309" rx="6" ry="11"/><path d="M796 346q0-24 8-25 8 2 9 25"/></g>`),
    G('j',884,288,30,38,`<path d="M885 326l14-36 14 36" ${W} stroke-width="3.500"/>`),
    G('j',940,287,38,48,'<path d="M942 288h30v46h-30zM974 300v20" fill="none" stroke="#fff" stroke-width="3.500"/><path d="M945 294h9v34h-9z" fill="#fff"/>'),
    G('j',996,280,40,72,'<path d="M998 310q0-18 8-18 4-14 12-10 12 4 10 20l6 20-20 16h-10q-8-10-6-28z" fill="#fff"/><ellipse cx="1023" cy="328" rx="11" ry="21" fill="#fff" stroke="#1a6bc4" stroke-width="3"/><path d="M1017 324q2-12 12-6M1030 332q-4 12-12 6" fill="none" stroke="#1a6bc4" stroke-width="4"/>'),
    G('j',1060,276,30,68,`<g ${W} stroke-width="3"><path d="M1062 344q0-56 28-66"/><path d="M1069 344q2-44 21-50"/><path d="M1076 344q2-28 14-34"/></g><path d="M1083 332h7v12h-7z" fill="#fff"/>`),
    G('j',1112,278,42,70,`<g ${W} stroke-width="3"><path d="M1114 300h6l8-18v62l-8-18h-6z"/><path d="M1133 300q4 12 0 26M1139 292q7 20 0 42M1146 284q9 30 0 58"/></g>`),
    T(2933,2971,2034,'CAT','',22),
    box(3000,1998,117,70,col(3000,1998,[T(3032,3085,2015,'12:24','',22),T(3000,3117,2050,'02/07/2018','',22)])),
    G('j',1456,260,60,138,'<path d="M1457 262h40v72h-24l-8 10v-10h-8z" fill="#fff"/><path d="M1464 278h26M1464 296h26M1464 314h20" stroke="#1f170e" stroke-width="6"/><ellipse cx="1495" cy="352" rx="18" ry="45" fill="#2d2a27" stroke="#777" stroke-width="2.500"/><text x="1487" y="376" font-size="62" font-weight="700" textLength="16" lengthAdjust="spacingAndGlyphs" fill="#fff">2</text>'),
    line(3222,1994,2,77,'#5a554e')];
  return row(278,1994,[...icons,...tray],'height:72px')+row(278,2066,[run(667,79),run(1335,78),run(1811,79),run(2002,78),run(2090,93)])}
});
def('app-window',class extends Base{
  css(){return `:host{position:relative;width:2952px;height:1660px;margin:170px 0 0 276px;background:#efefef;overflow:hidden}
    .top{height:45px;background:#fff}.menu{height:37px}.ln{height:3px;background:#bababa}.mid{display:flex;height:1325px}
    .lb{width:83px;flex:none}.dock{width:511px;flex:none;border:solid #bababa;border-width:0 2px 3px 3px;background:#fff}
    .cv{flex:1;margin-left:11px;border:solid #bababa;border-width:0 2px 3px 3px;background:#fff;overflow:hidden}
    .tb1,.tb2{border-bottom:2px solid #bababa}`}
  html(){return `<div class="top">${row(278,411,[logo(283,416,26,31),T(320,446,432,'QGIS 2.18.13','color:#999',22),
      line(2991,431,20,2,'#555'),box(3082,422,19,19,svg('0 0 19 19','<path d="M1 5h13v13h-13zM5 5V1h13v13h-4" fill="none" stroke="#555" stroke-width="1.500"/>')),
      box(3173,422,19,19,svg('0 0 19 19','<path d="M1 1L18 18M18 1L1 18" stroke="#555" stroke-width="1.500"/>'))])}</div>
    <div class="menu">${row(278,456,[T(293,355,475,'Project')])}</div><div class="ln"></div>
    <div class="tb1"><tool-bar n="1"></tool-bar></div><div class="tb2"><tool-bar n="2"></tool-bar></div><div class="ln"></div>
    <div class="mid"><div class="lb"><layer-bar></layer-bar></div>
      <div class="dock">${col(364,618,[dots(366,624,20,9),line(364,632,500,64,'#efefef'),
        box(364,698,500,41,'','border:2px solid #8a8a8a;background:linear-gradient(#fff,#e2e2e2)'),
        box(366,1122,30,26,svg('0 0 30 26','<path d="M14 5v16L8 13z"/>'),'border:2px solid #8a8a8a;border-radius:4px;background:#f4f4f4'),
        box(364,1149,504,96,'','background:#efefef;border-top:2px solid #bababa;border-bottom:2px solid #bababa'),
        box(364,1245,504,30,svg('0 0 504 30','<path d="M10 7h16v14h-16zM12 14h12" fill="#fff" stroke="#777" stroke-width="2"/>'),'background:#efefef')])}</div>
      <div class="cv"><district-map></district-map></div></div>
    <status-bar></status-bar><task-bar></task-bar><layer-dialog></layer-dialog>`}
});

/* ---- layer properties dialog ---- */
const abc=(x,y,w,h,c='#000')=>box(x,y,w,h,`<fit-text style="font-weight:700;line-height:${h}px;color:${c}">abc</fit-text>`);
const SIDE=[
 ['General',438,506,G('a',266,288,84,112,'<path d="M272 290l8 8 30 46" stroke="#d5d5d5" stroke-width="7" fill="none"/><path d="M302 290q36-6 46 30l-2 14-12-16-24 22-12-14 18-22z" fill="#2b2f33"/><path d="M302 336l44 60" stroke="#f07b1c" stroke-width="15"/><path d="M312 344l-42 48" stroke="#1e4c8c" stroke-width="15"/><path d="M308 346l-38 42" stroke="#6a9ad4" stroke-width="4"/>')],
 ['Style',438,481,G('a',264,456,86,90,'<path d="M286 460l50 14-30 40-40-20z" fill="#f0d83e"/><path d="M276 480l30 12-16 30-20-10z" fill="#5b85c4"/><path d="M266 506l30 14 4 24-32-18z" fill="#d93030"/><path d="M298 498l26-10 10 20-22 36-30-20z" fill="#e3b274" stroke="#a87432" stroke-width="2"/><path d="M322 494l26-36" stroke="#d08a28" stroke-width="8"/>')],
 ['Labels',443,498,G('a',276,626,84,64,'<path d="M288 628h68v59h-68l-11-30z" fill="#bccb6a" stroke="#8fa43c" stroke-width="3"/><text x="295" y="671" font-size="44" font-weight="700" textLength="56" lengthAdjust="spacingAndGlyphs" fill="#3a5a6a">abc</text>')],
 ['Fields',438,490,G('a',267,766,80,94,'<path d="M268 768h78v90h-78z" fill="#dcdcd6" stroke="#999" stroke-width="2"/><path d="M268 768h78v15h-78z" fill="#4377b8"/><path d="M272 793h70M272 806h70M272 819h70M272 832h70M272 845h70" stroke="#a2a29c" stroke-width="4"/><path d="M294 784v74M320 784v74" stroke="#eee" stroke-width="3"/>')],
 ['Rendering',438,527,G('a',266,920,78,104,'<path d="M284 962l24 4 12 20-22 36-30-26z" fill="#e8ae62" stroke="#b07428" stroke-width="3"/><path d="M310 970l28-46" stroke="#d08a28" stroke-width="9"/>')],
 ['Display',438,499,G('a',267,1075,80,100,'<path d="M280 1078h54q12 0 12 16v34q0 16-14 17h-20l-22 26 4-26h-12q-14-1-14-17v-34q0-16 12-16z" fill="#e5d983" stroke="#b7a53c" stroke-width="3"/><path d="M276 1092q4-8 12-8" stroke="#fff" stroke-width="5" fill="none"/>')],
 ['Actions',438,501,G('a',264,1228,86,118,'<ellipse cx="316" cy="1272" rx="27" ry="35" fill="#6692c8" stroke="#e4e4e4" stroke-width="8"/><ellipse cx="316" cy="1272" rx="32" ry="41" fill="none" stroke="#e4e4e4" stroke-width="7" stroke-dasharray="14 12"/><path d="M306 1254l24 18-24 18z" fill="#fff"/><ellipse cx="278" cy="1324" rx="11" ry="15" fill="#7aa2d0" stroke="#cfcfcf" stroke-width="5"/>')],
 ['Joins',438,482,G('b',325,66,120,112,'<path d="M358 122l68-54 4 18 14 12v46l-14 8-2 24z" fill="#7da5da" stroke="#2a4c80" stroke-width="4"/><ellipse cx="340" cy="121" rx="12" ry="17" fill="#5a86c0" stroke="#2a4c80" stroke-width="3"/>')],
 ['Diagrams',438,522,G('b',332,236,108,76,'<path d="M340 242h99v68h-99z" fill="#dedcd2" stroke="#f4f4f0" stroke-width="3"/><path d="M333 236h9v74h-9z" fill="#f2f2ee"/><path d="M352 254l24-6 10 20-24 10zM404 252l30 4-6 24-20-8z" fill="#bcbab0"/><path d="M380 250q-22 4-20 26 2 16 18 20z" fill="#f4d74a"/><path d="M380 250q20 2 20 22h-20z" fill="#6a93c4"/><path d="M380 272h20q0 20-20 24z" fill="#d83c34"/>')],
 ['Metadata',438,519,G('b',332,378,107,116,'<ellipse cx="385" cy="435" rx="52" ry="56" fill="#6a9ad2" stroke="#8db6e4" stroke-width="4"/><text x="368" y="472" font-size="98" font-style="italic" font-weight="700" font-family="Liberation Serif" textLength="36" lengthAdjust="spacingAndGlyphs" fill="#fff">i</text>')],
 ['Variables',438,518,G('b',348,545,66,92,'<path d="M408 566q-6-18-26-16-24 2-24 22 2 18 24 18-28 0-30 20 2 22 32 22 24 0 28-22" fill="none" stroke="#653a6c" stroke-width="8"/>')],
 ['Legend',438,501,G('b',336,700,78,96,'<g stroke-width="5"><path d="M339 703h23v23h-23z" fill="#ffd21a" stroke="#d9940a"/><path d="M339 735h23v23h-23z" fill="#ff5a1a" stroke="#b8340c"/><path d="M339 767h23v23h-23z" fill="#16b45a" stroke="#0c7038"/></g><path d="M370 721h28M370 754h44M370 788h18" stroke="#aaa" stroke-width="8"/>')]];
def('side-nav',class extends Base{
  css(){return ':host{width:230px;flex:none;background:#5d5d5d}'}
  html(){return SIDE.map((s,k)=>{const y=488+k*52.4,it=s[3];const on=s[0]==='Labels';
    return `<div style="height:52.4px;${on?'background:#efefef;color:#000':'color:#fff'}">${row(382,y,[it,T(s[1],s[2],y+27.5,s[0])])}</div>`}).join('')}
});
const LIST=[['Text',687,723,box(650,830,26,18,'<fit-text style="font-weight:700;font-size:15px;line-height:18px;color:#56718c">abc</fit-text>')],
 ['Formatting',688,782,G('b',1060,55,76,66,'<path d="M1061 70h22M1072 60v20M1084 98l-18 9 18 10" stroke="#999" stroke-width="5" fill="none"/><text x="1089" y="82" font-size="40" font-weight="700" textLength="46" lengthAdjust="spacingAndGlyphs" fill="#444">ab</text><text x="1115" y="118" font-size="40" font-weight="700" textLength="20" lengthAdjust="spacingAndGlyphs" fill="#444">c</text>')],
 ['Buffer',688,739,G('b',1057,154,84,50,'<rect x="1058" y="160" width="82" height="42" rx="12" fill="#aac0fa"/><text x="1063" y="193" font-size="42" font-weight="700" textLength="72" lengthAdjust="spacingAndGlyphs" fill="#2d3b55">abc</text>')],
 ['Background',688,789,G('b',1058,237,80,74,'<path d="M1060 250q38-8 76 0 6 48-38 60-44-12-38-60z" fill="#0b6cba" stroke="#223" stroke-width="3"/><path d="M1062 238l12 4 12-4 12 4 12-4 12 4 12-4v14h-72z" fill="#e0202a"/>')],
 ['Shadow',688,757,G('b',1060,330,80,76,'<path d="M1070 342q34-8 68 2 6 48-34 60-38-12-34-60z" fill="#555"/><path d="M1063 334l10 4 12-4 12 4 12-4 12 4 10-4q8 50-34 66-40-14-34-66z" fill="#edf2fe" stroke="#a6b4d8" stroke-width="3"/>')],
 ['Placement',688,778,G('b',1060,417,78,84,'<path d="M1098 417l16 18-16 14-16-14zM1098 501l16-18-16-14-16 14zM1060 458l18-18 14 18-14 18zM1138 458l-18-18-14 18 14 18z" fill="#7391a8" stroke="#5c788e" stroke-width="2"/>')],
 ['Rendering',688,776,G('b',1062,513,74,78,'<path d="M1136 514q-6 42-32 56l-10-8q14-36 42-48z" fill="#a8a8a0"/><path d="M1096 562l10 8q-6 20-42 20 18-8 32-28z" fill="#4a4a46"/>')]];
def('label-kinds',class extends Base{
  css(){return ':host{height:100%;border:solid #bababa;border-width:0 2px 3px;background:#fff;display:flex;flex-direction:column}.f{flex:1}'}
  html(){return `<div style="height:6px"></div>`+LIST.map((l,k)=>{const y=826+k*30.7;
     return `<div style="height:30.7px;flex:none;${k?'':'background:#efefef'}">${row(642,y,[l[3],T(l[1],l[2],y+15,l[0])])}</div>`}).join('')+
    `<div class="f"></div><div style="height:27px">`+row(642,1819,[btn(643,1820,24,25,'<svg width="8" height="12"><path d="M7 0v12L1 6z"/></svg>'),
      btn(668,1820,85,25,'<div style="width:30px;height:15px;background:conic-gradient(at 2px 3px,#0000 75%,#bbb 0) 0 0/6px 6px"></div>'),
      btn(759,1820,24,25,'<svg width="8" height="12"><path d="M7 0v12L1 6z"/></svg>'),btn(784,1820,24,25,'<svg width="8" height="12"><path d="M1 0v12L7 6z"/></svg>')])+'</div>'}
});
def('text-form',class extends Base{
  css(){return ':host{height:100%;background:#efefef}'}
  html(){const L=(y,items)=>box(823,y,820,40,row(823,y,items));
  return col(823,814,[dots(968,814,328,5,9,9),
    L(822,[T(830,866,844,'Text')]),
    L(864,[T(830,869,885,'Font'),combo(958,868,614,34,'MS Shell Dlg 2',127),over(1588,871)]),
    L(922,[T(830,873,943.500,'Style'),combo(958,926,614,34,'Normal',62),over(1588,930)]),
    L(970,[btn(958,973,37,37,'<u>U</u>',12),over(1009,979),btn(1059,973,37,37,'<s>S</s>',12),over(1110,979),btn(1434,973,37,37,'<span style="color:#7d8796">B</span>',11),over(1486,979),btn(1536,973,37,37,'<span style="color:#7d8796">I</span>',8),over(1588,979)]),
    L(1021,[T(830,867,1042,'Size'),spin(958,1024,614,33,'7.5000',58),over(1588,1029)]),
    L(1070,[combo(958,1074,614,34,'Points',53),over(1588,1078)]),
    L(1119,[T(830,876,1140,'Color'),btn(958,1122,161,34,'<div style="width:147px;height:25px;background:#000;border-radius:4px"></div>'),btn(1119,1122,23,34,'<svg width="14" height="9"><path d="M0 0h14l-7 9z"/></svg>'),over(1588,1127)]),
    L(1168,[T(830,949,1190,'Transparency'),box(958,1176,481,23,'<q-slider></q-slider>'),spin(1448,1171,124,34,'0 %',35),over(1588,1176)]),
    L(1217,[T(830,918,1239,'Type case'),combo(958,1221,614,34,'No change',92),over(1588,1225)]),
    L(1266,[T(830,899,1288,'Spacing'),T(958,1003,1288,'letter'),spin(1013,1270,559,34,'0.0000',60),over(1588,1274)]),
    L(1315,[T(958,1002,1337,'word'),spin(1012,1319,560,34,'0.0000',60),over(1588,1324)]),
    L(1364,[T(830,933,1386,'Blend mode'),combo(958,1369,614,34,'Normal',62),over(1588,1373)]),
    L(1412,[box(830,1420,25,25,'','border:2px solid #bababa;background:#fafafa;border-radius:2px'),T(865,1098,1434,'Apply label text substitutes'),btn(1582,1414,46,39,'<span style="color:#777">...</span>',16)])])}
});
def('field-menu',class extends Base{
  css(){return ':host{position:absolute;left:734px;top:590px;width:846px;height:128px;border:2px solid #bababa;border-bottom-width:3px;background:#fff;box-shadow:5px 5px 4px -1px #0005}'}
  html(){return [['CODDIS',69],['CODDISTRIT',111],['NOMDIS',73],['NOMBRE',76]].map(([t,w],k)=>{const s=k===2,y=592+k*30.8;
    return `<div style="height:30.8px;${s?'background:#39f;color:#fff':''}">${row(736,y,[abc(741,y,31,28,s?'#12355a':'#000'),box(777,y,801,30.8,`<fit-text style="width:${w}px;line-height:28px;margin-left:3px">${t}</fit-text>`,s?'border:1.500px dotted #d87820;border-right:0':'border:1.5px solid #0000')])}</div>`}).join('')}
});
def('dialog-head',class extends Base{
  css(){return ':host{height:56px;background:#fff}'}
  html(){return row(382,432,[logo(397,443,26,31),T(434,917,460,'Layer Properties - DISTRITOS_20151002 | Labels','',23),T(1516,1528,460,'?','',23),
    box(1601,450,18,18,svg('0 0 18 18','<path d="M1 1L17 17M17 1L1 17" stroke="#000" stroke-width="1.500"/>'))])}
});
def('labels-page',class extends Base{
  css(){return ':host{flex:1;background:#efefef}'}
  html(){const L=(y,h,items)=>box(612,y,1043,h,row(612,y,items));
  const sb=(y,h,up)=>btn(1610,y,24,h,up===2?'':`<svg width="12" height="8"><path d="${up?'M0 8h12L6 0z':'M0 0h12L6 8z'}"/></svg>`);
  const foot=(x,w,t,tw,e='#b5b5b5')=>btn(x,1857,w,44,t,tw,`edge="${e}" to="#dedede"`);
  const rail=box(1610,661,24,113,col(1610,661,[sb(661,40,2),dots(1610,701,24,25,6,6),sb(726,23,1),sb(750,24,0)]),'margin-left:-24px');
  return col(612,488,[
    L(494,42,[box(632,495,936,41,'<q-combo tw="222" pad="12"><span slot="icon" style="display:block;width:27px;height:15px;margin-right:6px">'+svg('843 322 60 44','<path d="M851 323h51v41h-51l-8-21z" fill="#f3dc4e" stroke="#c9a514" stroke-width="3"/><text x="856" y="355" font-size="30" font-weight="700" textLength="38" lengthAdjust="spacingAndGlyphs" fill="#5a4a10">abc</text>')+'</span>Show labels for this layer</q-combo>'),
      btn(1580,494,57,42,svg('1438 305 50 78','<path d="M1456 305l18 38-18 34-18-34z" fill="#54738e"/><path d="M1456 322v42M1444 343h24M1448 326l16 34M1464 326l-16 34" stroke="#e4ebf0" stroke-width="2"/><path d="M1464 380v-22h8v-8h6v-10h9v40z" fill="#eecb1c" stroke="#c9a514" stroke-width="1"/>').replace('width:100%;height:100%','width:34px;height:26px'),'','edge="#b5b5b5"')]),
    L(545,45,[T(636,724,568,'Label with'),box(734,545,848,43,'<q-combo edit tw="0"></q-combo>'),btn(1592,545,45,45,svg('1460 470 24 62','<path d="M1482 484q-4-12-10-12-10 2-10 14 0 12 10 13-12 0-12 16 2 14 12 15 9 0 11-14" fill="none" stroke="#6c4478" stroke-width="4"/>').replace('width:100%;height:100%','width:17px;height:22px'))]),
    L(598,32,[tri(639,608,16,11,'#333'),T(668,732,614,'Text/B','font-weight:700;color:#444'),line(1584,610,53,3,'#8f8f8f')]),
    box(636,634,1001,143,row(638,636,[T(647,733,664,'Lorem Ips','color:#333'),sb(637,24,1),rail]),'border:solid #bababa;border-width:2px 2px 3px;background:#fff'),
    L(778,34,[box(636,778,485,34,'<fit-text style="width:117px;margin:2px 4px">Lorem Ipsum</fit-text>','border:2px solid #bababa;background:#fff'),
      btn(1121,778,37,36,svg('768 1153 31 55','<path d="M768 1176l12-22v12q20 0 18 26l-6 14h-10q8-18-2-22v12z" fill="#e5803a"/>').replace('width:100%;height:100%','width:22px;height:18px')),
      box(1167,782,307,22,'<q-slider at="15"></q-slider>'),box(1484,778,130,34,'','border:2px solid #8a8a8a;background:#fff'),btn(1614,778,23,34,'<svg width="14" height="9" style="margin-top:-8px"><path d="M0 0h14l-7 9z"/></svg>')]),
    box(612,814,1043,1034,row(612,814,[dots(615,958,4,480,9,9),box(640,820,172,1028,'<label-kinds></label-kinds>'),box(823,814,820,690,'<text-form></text-form>')])),
    L(1857,44,[box(621,1857,143,44,row(623,1859,[T(658,702,1880,'Style'),tri(742,1876,12,8)]),'border:2px solid #b5b5b5;border-bottom-width:3px;border-radius:4px;background:linear-gradient(#fdfdfd,#dedede)'),
      foot(1033,144,'OK',25,'#6a6a6a'),foot(1192,143,'Cancel',59),foot(1350,143,'Apply',49),foot(1508,143,'Help',39)])])}
});
def('layer-dialog',class extends Base{
  css(){return `:host{position:absolute;left:102px;top:19px;width:1277px;height:1477px;border:2px solid #1883d7;background:#efefef;box-shadow:0 6px 34px #0008}
    .b{display:flex;height:1417px}.l{position:absolute;left:-382px;top:-432px;width:0;height:0}`}
  html(){const F=(x,y,x2,y2)=>`<mark-frame style="left:${x}px;top:${y}px;width:${x2-x}px;height:${y2-y}px"></mark-frame>`;
  return `<dialog-head></dialog-head><div class="b"><side-nav></side-nav><labels-page></labels-page></div>
   <div class="l"><field-menu></field-menu>${F(625,475,1584,558)}${F(625,546,1584,745)}${F(624,809,823,1107)}${F(811,802,1652,1515)}</div>`}
});
def('slide-page',class extends Base{
  css(){return `:host{width:3508px;height:2480px;border:2px solid ${INK};background:#fff;overflow:hidden;display:flex;flex-direction:column;align-items:flex-start}`}
  html(){return '<slot name="title"></slot><slot></slot>'}
});
</script>
</body>
</html>
